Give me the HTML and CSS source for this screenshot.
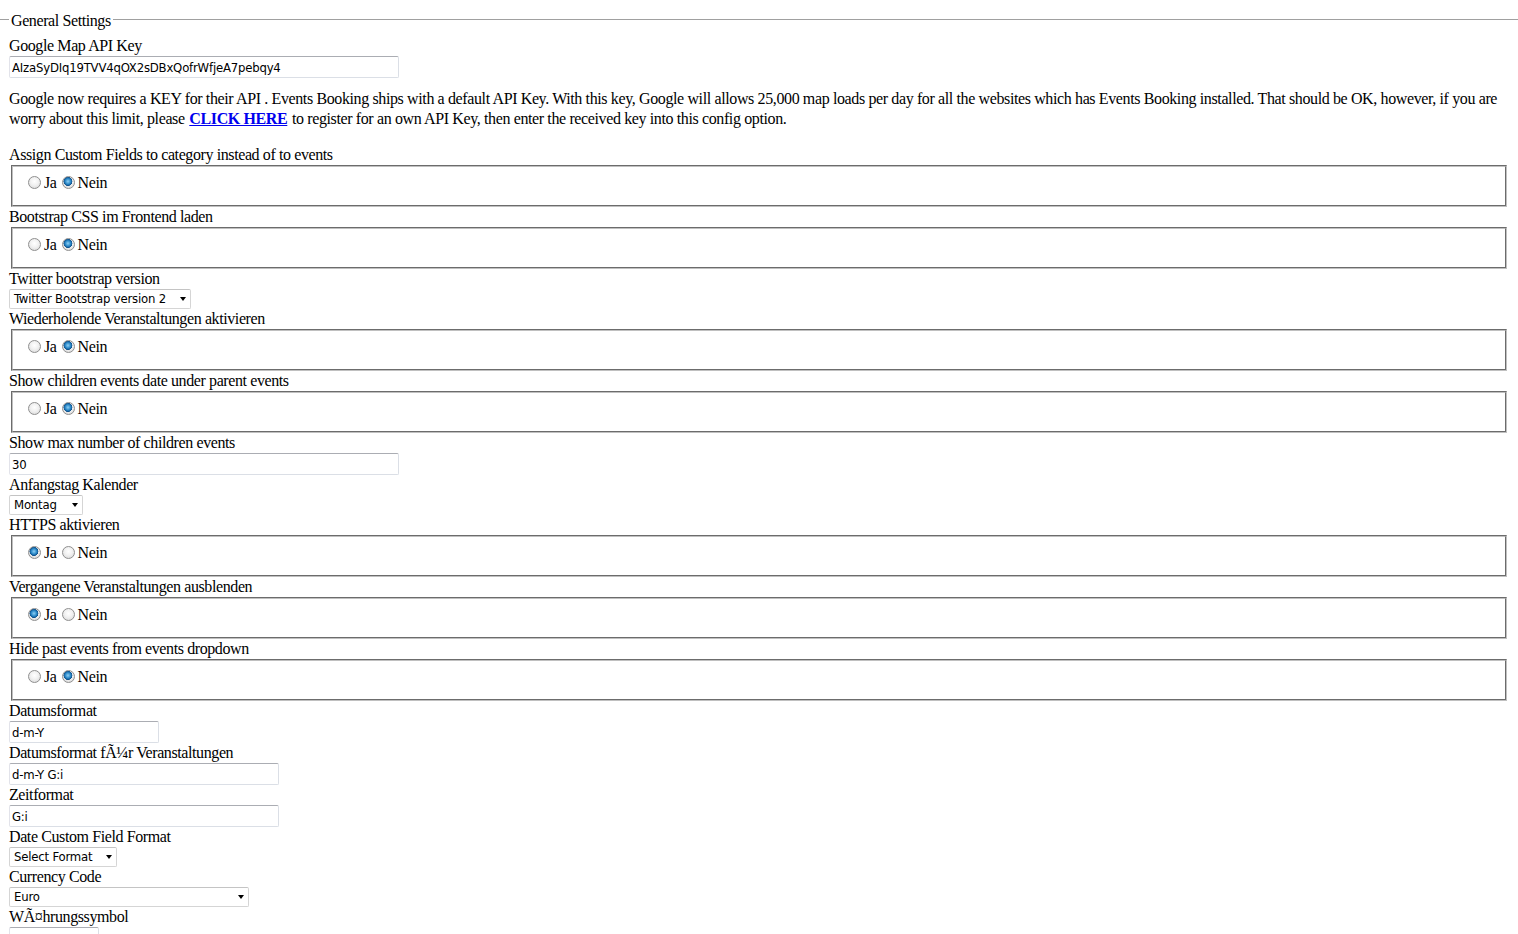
FILE: index.html
```html
<!DOCTYPE html>
<html>
<head>
<meta charset="utf-8">
<title>General Settings</title>
<link rel="stylesheet" href="styles.css">
</head>
<body>
<fieldset class="general">
  <legend class="general-legend">General Settings</legend>

  <div class="lbl">Google Map API Key</div>
  <input class="txt w-key" type="text" value="AIzaSyDIq19TVV4qOX2sDBxQofrWfjeA7pebqy4">
  <p class="note">Google now requires a KEY for their API . Events Booking ships with a default API Key. With this key, Google will allows 25,000 map loads per day for all the websites which has Events Booking installed. That should be OK, however, if you are worry about this limit, please <a class="click" href="#">CLICK HERE</a> to register for an own API Key, then enter the received key into this config option.</p>

  <div class="lbl">Assign Custom Fields to category instead of to events</div>
  <fieldset class="radios"><input class="rd" type="radio" name="r1"><span class="opt">Ja</span><input class="rd rd2" type="radio" name="r1" checked><span class="opt">Nein</span></fieldset>

  <div class="lbl">Bootstrap CSS im Frontend laden</div>
  <fieldset class="radios"><input class="rd" type="radio" name="r2"><span class="opt">Ja</span><input class="rd rd2" type="radio" name="r2" checked><span class="opt">Nein</span></fieldset>

  <div class="lbl">Twitter bootstrap version</div>
  <span class="sel w-tw"><span class="sel-text">Twitter Bootstrap version 2</span></span>

  <div class="lbl">Wiederholende Veranstaltungen aktivieren</div>
  <fieldset class="radios"><input class="rd" type="radio" name="r3"><span class="opt">Ja</span><input class="rd rd2" type="radio" name="r3" checked><span class="opt">Nein</span></fieldset>

  <div class="lbl">Show children events date under parent events</div>
  <fieldset class="radios"><input class="rd" type="radio" name="r4"><span class="opt">Ja</span><input class="rd rd2" type="radio" name="r4" checked><span class="opt">Nein</span></fieldset>

  <div class="lbl">Show max number of children events</div>
  <input class="txt w-key" type="text" value="30">

  <div class="lbl">Anfangstag Kalender</div>
  <span class="sel w-mon"><span class="sel-text">Montag</span></span>

  <div class="lbl">HTTPS aktivieren</div>
  <fieldset class="radios"><input class="rd" type="radio" name="r5" checked><span class="opt">Ja</span><input class="rd rd2" type="radio" name="r5"><span class="opt">Nein</span></fieldset>

  <div class="lbl">Vergangene Veranstaltungen ausblenden</div>
  <fieldset class="radios"><input class="rd" type="radio" name="r6" checked><span class="opt">Ja</span><input class="rd rd2" type="radio" name="r6"><span class="opt">Nein</span></fieldset>

  <div class="lbl">Hide past events from events dropdown</div>
  <fieldset class="radios"><input class="rd" type="radio" name="r7"><span class="opt">Ja</span><input class="rd rd2" type="radio" name="r7" checked><span class="opt">Nein</span></fieldset>

  <div class="lbl">Datumsformat</div>
  <input class="txt w-date" type="text" value="d-m-Y">

  <div class="lbl">Datumsformat fÃ¼r Veranstaltungen</div>
  <input class="txt w-mid" type="text" value="d-m-Y G:i">

  <div class="lbl">Zeitformat</div>
  <input class="txt w-mid" type="text" value="G:i">

  <div class="lbl">Date Custom Field Format</div>
  <span class="sel w-fmt"><span class="sel-text">Select Format</span></span>

  <div class="lbl">Currency Code</div>
  <span class="sel w-cur"><span class="sel-text">Euro</span></span>

  <div class="lbl">WÃ¤hrungssymbol</div>
  <input class="txt w-sym" type="text" value="€">
</fieldset>
</body>
</html>
```
FILE: styles.css
```css
html, body {
  margin: 0;
  padding: 0;
  background: #ffffff;
}

body {
  font-family: "Liberation Serif", "Times New Roman", serif;
  font-size: 16px;
  line-height: 20px;
  letter-spacing: -0.4px;
  color: #000000;
}

.general {
  margin: 8px 0 0 0;
  padding: 5px 9px 0 9px;
  border: 0;
  border-top: 1px solid #a0a0a0;
  min-width: 0;
}

.general-legend {
  padding: 3px 2px 0 2px;
  line-height: 20px;
}

.lbl {
  display: block;
  height: 20px;
  line-height: 20px;
  white-space: nowrap;
}

.txt {
  display: block;
  box-sizing: border-box;
  height: 22px;
  margin: 0;
  padding: 0 2px;
  border: 1px solid #dbdfe6;
  border-top-color: #abadb3;
  border-left-color: #e2e3ea;
  border-radius: 2px;
  font-family: "DejaVu Sans Condensed", "Liberation Sans", Arial, sans-serif;
  font-stretch: condensed;
  font-size: 13px;
  letter-spacing: -0.2px;
  color: #000000;
  background: #ffffff;
  outline: none;
}

.w-key { width: 390px; }
.w-date { width: 150px; }
.w-mid { width: 270px; }
.w-sym { width: 90px; }

.note {
  margin: 11px 0 16px 0;
  line-height: 20px;
  letter-spacing: -0.38px;
}

.click {
  color: #0000ee;
  font-weight: bold;
  text-decoration: underline;
  margin: 0 1px;
}

.radios {
  display: block;
  margin: 0 2px;
  padding: 6px 12px 12px 12px;
  border: 2px groove #c0c0c0;
  line-height: 20px;
  height: 20px;
  min-width: 0;
}

.rd {
  appearance: none;
  -webkit-appearance: none;
  box-sizing: border-box;
  width: 13px;
  height: 13px;
  margin: 0 3px 0 3px;
  padding: 0;
  vertical-align: -1px;
  border: 1px solid #8f8f8f;
  border-radius: 50%;
  background: radial-gradient(circle at 50% 40%, #ffffff 0%, #f1f1f1 45%, #d4d4d4 100%);
}

.rd:checked {
  background:
    radial-gradient(circle at 45% 40%, #8fd0f4 0%, #2c8ac9 30%, #0d4f8a 48%, rgba(13,79,138,0) 52%),
    radial-gradient(circle at 50% 40%, #ffffff 0%, #eeeeee 50%, #d0d0d0 100%);
}

.rd2 {
  margin-left: 5px;
}

.sel {
  position: relative;
  display: block;
  box-sizing: border-box;
  height: 20px;
  border: 1px solid #d5d5d5;
  border-top-color: #c4c4c4;
  border-radius: 2px;
  background: #ffffff;
  font-family: "DejaVu Sans Condensed", "Liberation Sans", Arial, sans-serif;
  font-stretch: condensed;
  font-size: 13px;
  letter-spacing: -0.2px;
  line-height: 18px;
  padding-left: 4px;
  white-space: nowrap;
  overflow: hidden;
}

.sel::after {
  content: "";
  position: absolute;
  right: 4px;
  top: 7px;
  width: 0;
  height: 0;
  border-left: 3.5px solid transparent;
  border-right: 3.5px solid transparent;
  border-top: 4px solid #000000;
}

.w-tw { width: 182px; }
.w-mon { width: 74px; }
.w-fmt { width: 108px; }
.w-cur { width: 240px; }
```
